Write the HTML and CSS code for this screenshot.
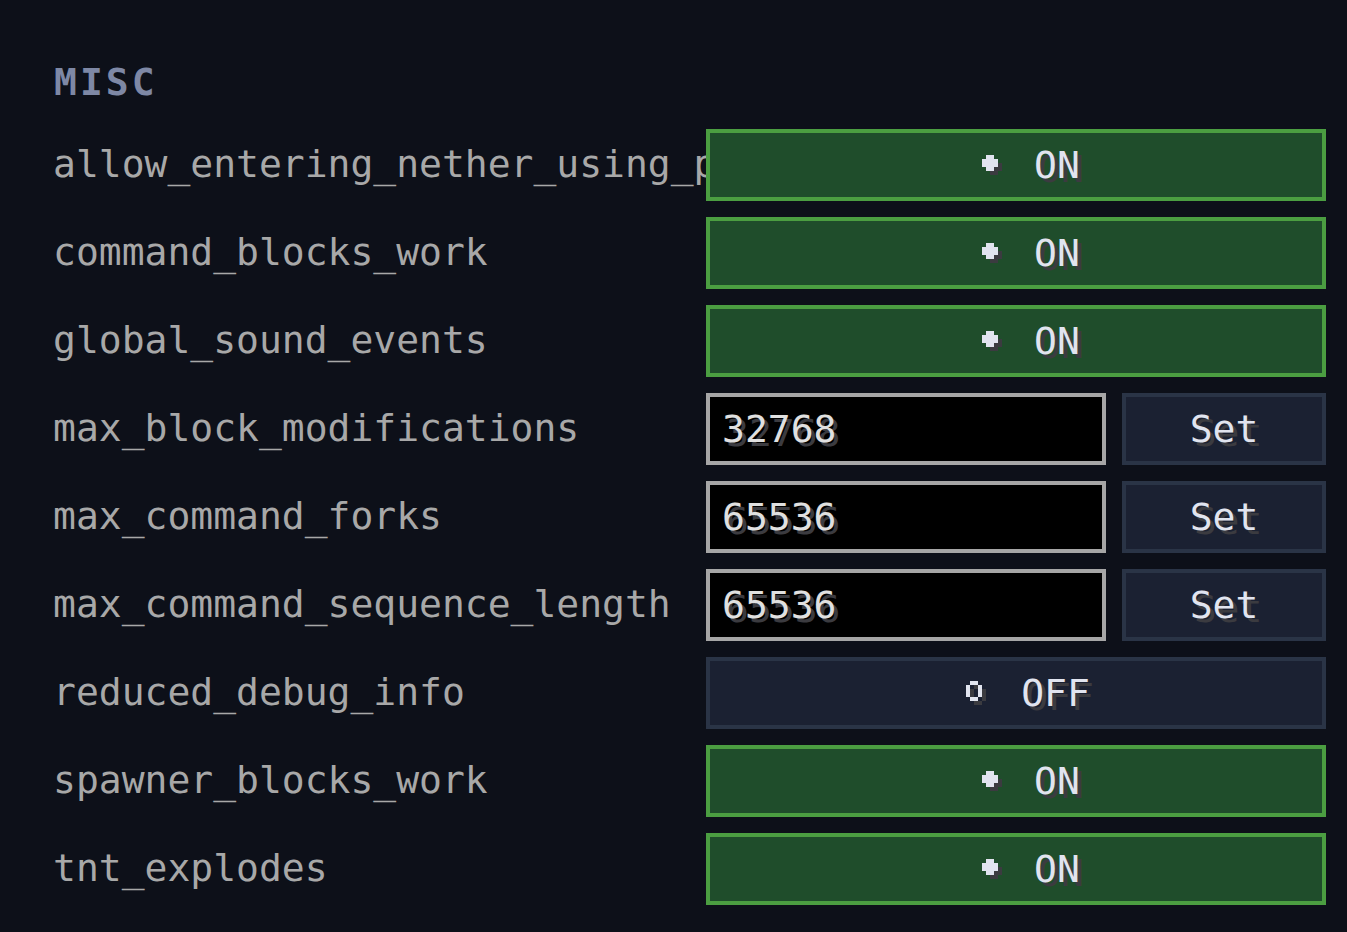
FILE: index.html
```html
<!DOCTYPE html>
<html lang="en">
    <head>
        <meta charset="UTF-8">
        <title>Game rules - misc</title>
        <meta name="viewport" content="width=device-width, initial-scale=1.0">
        <link rel="stylesheet" href="styles.css">
    </head>
    <body>
        <section class="rules">
            <h2 class="rules-title">MISC</h2>
            <div class="rules-grid">
                <div class="rule-name">allow_entering_nether_using_portals</div>
                <button class="toggle on"><svg class="dot" width="20" height="20" viewBox="0 0 20 20"><path class="dot-shadow" d="M8 4h8v4h4v8h-4v4h-8v-4h-4v-8h4z"/><path class="dot-face" d="M4 0h8v4h4v8h-4v4h-8v-4h-4v-8h4z"/></svg><span>ON</span></button>

                <div class="rule-name">command_blocks_work</div>
                <button class="toggle on"><svg class="dot" width="20" height="20" viewBox="0 0 20 20"><path class="dot-shadow" d="M8 4h8v4h4v8h-4v4h-8v-4h-4v-8h4z"/><path class="dot-face" d="M4 0h8v4h4v8h-4v4h-8v-4h-4v-8h4z"/></svg><span>ON</span></button>

                <div class="rule-name">global_sound_events</div>
                <button class="toggle on"><svg class="dot" width="20" height="20" viewBox="0 0 20 20"><path class="dot-shadow" d="M8 4h8v4h4v8h-4v4h-8v-4h-4v-8h4z"/><path class="dot-face" d="M4 0h8v4h4v8h-4v4h-8v-4h-4v-8h4z"/></svg><span>ON</span></button>

                <div class="rule-name">max_block_modifications</div>
                <div class="number-field">
                    <input type="text" class="number-input" value="32768">
                    <button class="set-btn">Set</button>
                </div>

                <div class="rule-name">max_command_forks</div>
                <div class="number-field">
                    <input type="text" class="number-input" value="65536">
                    <button class="set-btn">Set</button>
                </div>

                <div class="rule-name">max_command_sequence_length</div>
                <div class="number-field">
                    <input type="text" class="number-input" value="65536">
                    <button class="set-btn">Set</button>
                </div>

                <div class="rule-name">reduced_debug_info</div>
                <button class="toggle off"><svg class="ring" width="20" height="24" viewBox="0 0 20 24"><path class="dot-shadow" d="M8 4h8v4h4v12h-4v4h-8v-4h-4v-12h4zM8 8v12h8v-12z"/><path class="dot-face" d="M4 0h8v4h4v12h-4v4h-8v-4h-4v-12h4zM4 4v12h8v-12z"/></svg><span>OFF</span></button>

                <div class="rule-name">spawner_blocks_work</div>
                <button class="toggle on"><svg class="dot" width="20" height="20" viewBox="0 0 20 20"><path class="dot-shadow" d="M8 4h8v4h4v8h-4v4h-8v-4h-4v-8h4z"/><path class="dot-face" d="M4 0h8v4h4v8h-4v4h-8v-4h-4v-8h4z"/></svg><span>ON</span></button>

                <div class="rule-name">tnt_explodes</div>
                <button class="toggle on"><svg class="dot" width="20" height="20" viewBox="0 0 20 20"><path class="dot-shadow" d="M8 4h8v4h4v8h-4v4h-8v-4h-4v-8h4z"/><path class="dot-face" d="M4 0h8v4h4v8h-4v4h-8v-4h-4v-8h4z"/></svg><span>ON</span></button>
            </div>
        </section>
    </body>
</html>
```

FILE: styles.css
```css
:root{
    box-sizing: border-box;
    font-family: "DejaVu Sans Mono", "Liberation Mono", monospace;
}
*{
    box-sizing: inherit;
}

body{
    margin: 0;
    background-color: #0d1019;
    min-height: 100vh;
}

.rules{
    padding: 63px 21px 0 53px;
}
.rules-title{
    margin: 0 0 28px 1px;
    font-size: 38px;
    line-height: 38px;
    font-weight: bold;
    letter-spacing: 3px;
    color: #7e88a5;
}

.rules-grid{
    display: grid;
    grid-template-columns: 653px 620px;
    grid-auto-rows: 72px;
    row-gap: 16px;
}

.rule-name{
    display: flex;
    align-items: center;
    padding-bottom: 2px;
    overflow: hidden;
    white-space: nowrap;
    font-size: 38px;
    line-height: 38px;
    color: #a8a8a8;
}

/* shared pixel text look */
.toggle,
.set-btn,
.number-input{
    font-family: inherit;
    font-size: 38px;
    line-height: 38px;
    color: #e1e4ef;
    text-shadow: 4px 4px 0 #3b3b40;
    margin: 0;
    border-radius: 0;
    outline: none;
}

.toggle{
    display: flex;
    align-items: center;
    justify-content: center;
    gap: 32px;
    padding: 0 0 0 30px;
    border: 4px solid;
    cursor: pointer;
}
.toggle.on{
    background-color: #1f4d2b;
    border-color: #4b9e41;
}
.toggle.off{
    background-color: #1b2132;
    border-color: #2a3446;
    gap: 35px;
    padding-left: 24px;
}
.toggle svg{
    display: block;
    flex: none;
}
.dot-face{
    fill: #e1e4ef;
}
.dot-shadow{
    fill: #3b3b40;
}

.number-field{
    display: flex;
    gap: 16px;
}
.number-input{
    flex: 0 0 400px;
    width: 400px;
    padding: 0 12px;
    background-color: #000;
    border: 4px solid #a6a6a6;
    color: #e0e0e0;
}
.set-btn{
    flex: 1;
    padding: 0;
    background-color: #1b2132;
    border: 4px solid #2a3446;
    cursor: pointer;
}
```
